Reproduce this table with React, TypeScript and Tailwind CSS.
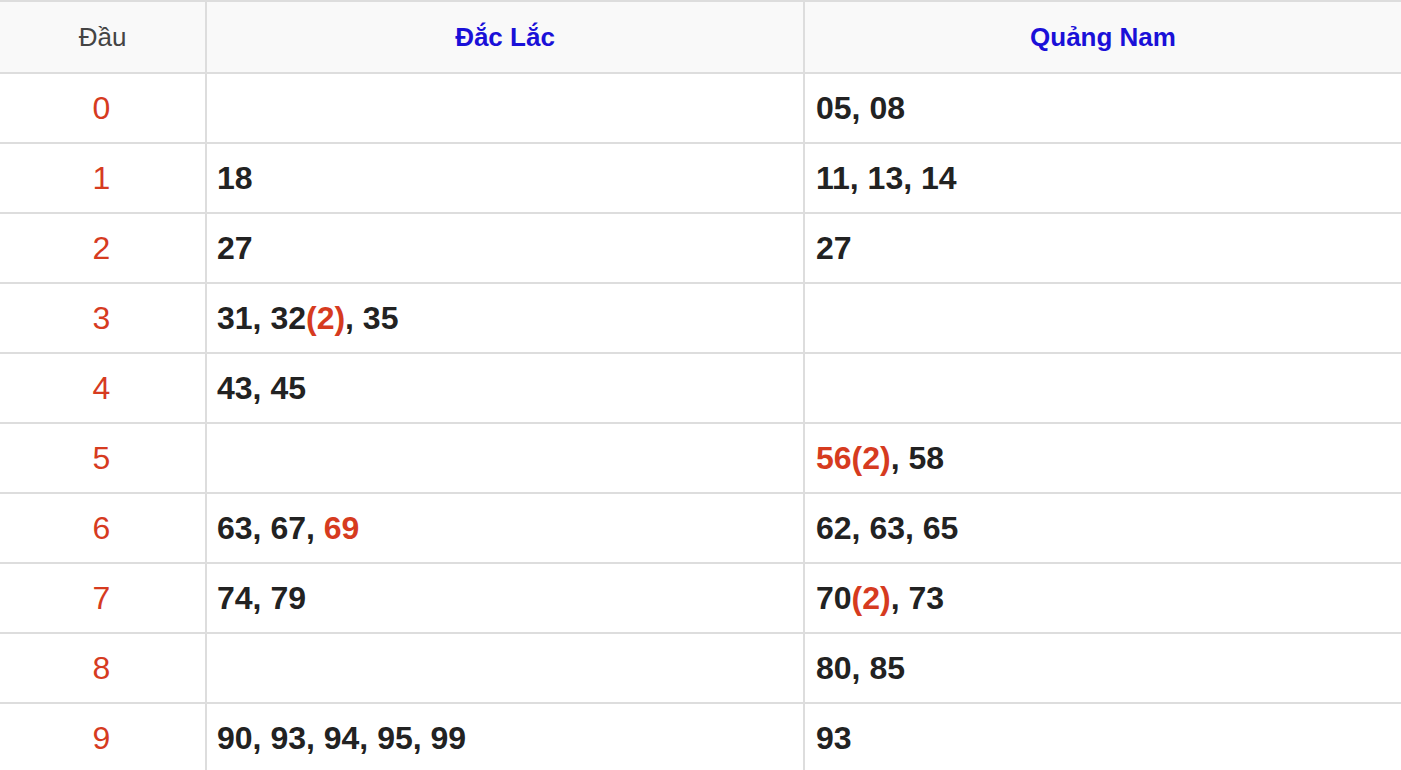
import React from 'react'

type Part = { text: string; hot?: boolean }

const rows: { head: string; a: Part[][]; b: Part[][] }[] = [
  { head: '0', a: [], b: [[{ text: '05' }], [{ text: '08' }]] },
  { head: '1', a: [[{ text: '18' }]], b: [[{ text: '11' }], [{ text: '13' }], [{ text: '14' }]] },
  { head: '2', a: [[{ text: '27' }]], b: [[{ text: '27' }]] },
  {
    head: '3',
    a: [[{ text: '31' }], [{ text: '32' }, { text: '(2)', hot: true }], [{ text: '35' }]],
    b: []
  },
  { head: '4', a: [[{ text: '43' }], [{ text: '45' }]], b: [] },
  { head: '5', a: [], b: [[{ text: '56(2)', hot: true }], [{ text: '58' }]] },
  {
    head: '6',
    a: [[{ text: '63' }], [{ text: '67' }], [{ text: '69', hot: true }]],
    b: [[{ text: '62' }], [{ text: '63' }], [{ text: '65' }]]
  },
  {
    head: '7',
    a: [[{ text: '74' }], [{ text: '79' }]],
    b: [[{ text: '70' }, { text: '(2)', hot: true }], [{ text: '73' }]]
  },
  { head: '8', a: [], b: [[{ text: '80' }], [{ text: '85' }]] },
  {
    head: '9',
    a: [[{ text: '90' }], [{ text: '93' }], [{ text: '94' }], [{ text: '95' }], [{ text: '99' }]],
    b: [[{ text: '93' }]]
  }
]

const Numbers: React.FC<{ items: Part[][]; wide?: boolean }> = ({ items, wide }) => (
  <div
    className={
      'flex items-center h-full border-l-2 border-[#dddddd] text-[32px] font-bold text-[#222222] ' +
      (wide ? 'pl-[11px]' : 'pl-[10px]')
    }
  >
    {items.map((item, i) => (
      <React.Fragment key={i}>
        {i > 0 && <span>,&nbsp;</span>}
        {item.map((p, j) => (
          <span key={j} className={p.hot ? 'text-[#d63b1f]' : ''}>
            {p.text}
          </span>
        ))}
      </React.Fragment>
    ))}
  </div>
)

export default function App() {
  return (
    <div className="w-[1401px] h-[770px] overflow-hidden bg-white font-['Liberation_Sans',Arial,sans-serif] leading-none">
      <div className="grid grid-cols-[205px_598px_598px] h-[72px] border-t-2 border-[#dddddd] bg-[#f9f9f9] text-[26px]">
        <div className="flex items-center justify-center text-[#444444]">Đầu</div>
        <div className="flex items-center justify-center border-l-2 border-[#dddddd] font-bold text-[#1a10d8]">
          Đắc Lắc
        </div>
        <div className="flex items-center justify-center border-l-2 border-[#dddddd] font-bold text-[#1a10d8]">
          Quảng Nam
        </div>
      </div>
      {rows.map(r => (
        <div
          key={r.head}
          className="grid grid-cols-[205px_598px_598px] h-[70px] border-t-2 border-[#dddddd]"
        >
          <div className="flex items-center justify-center pr-[2px] text-[32px] text-[#d63b1f]">{r.head}</div>
          <Numbers items={r.a} />
          <Numbers items={r.b} wide />
        </div>
      ))}
    </div>
  )
}
